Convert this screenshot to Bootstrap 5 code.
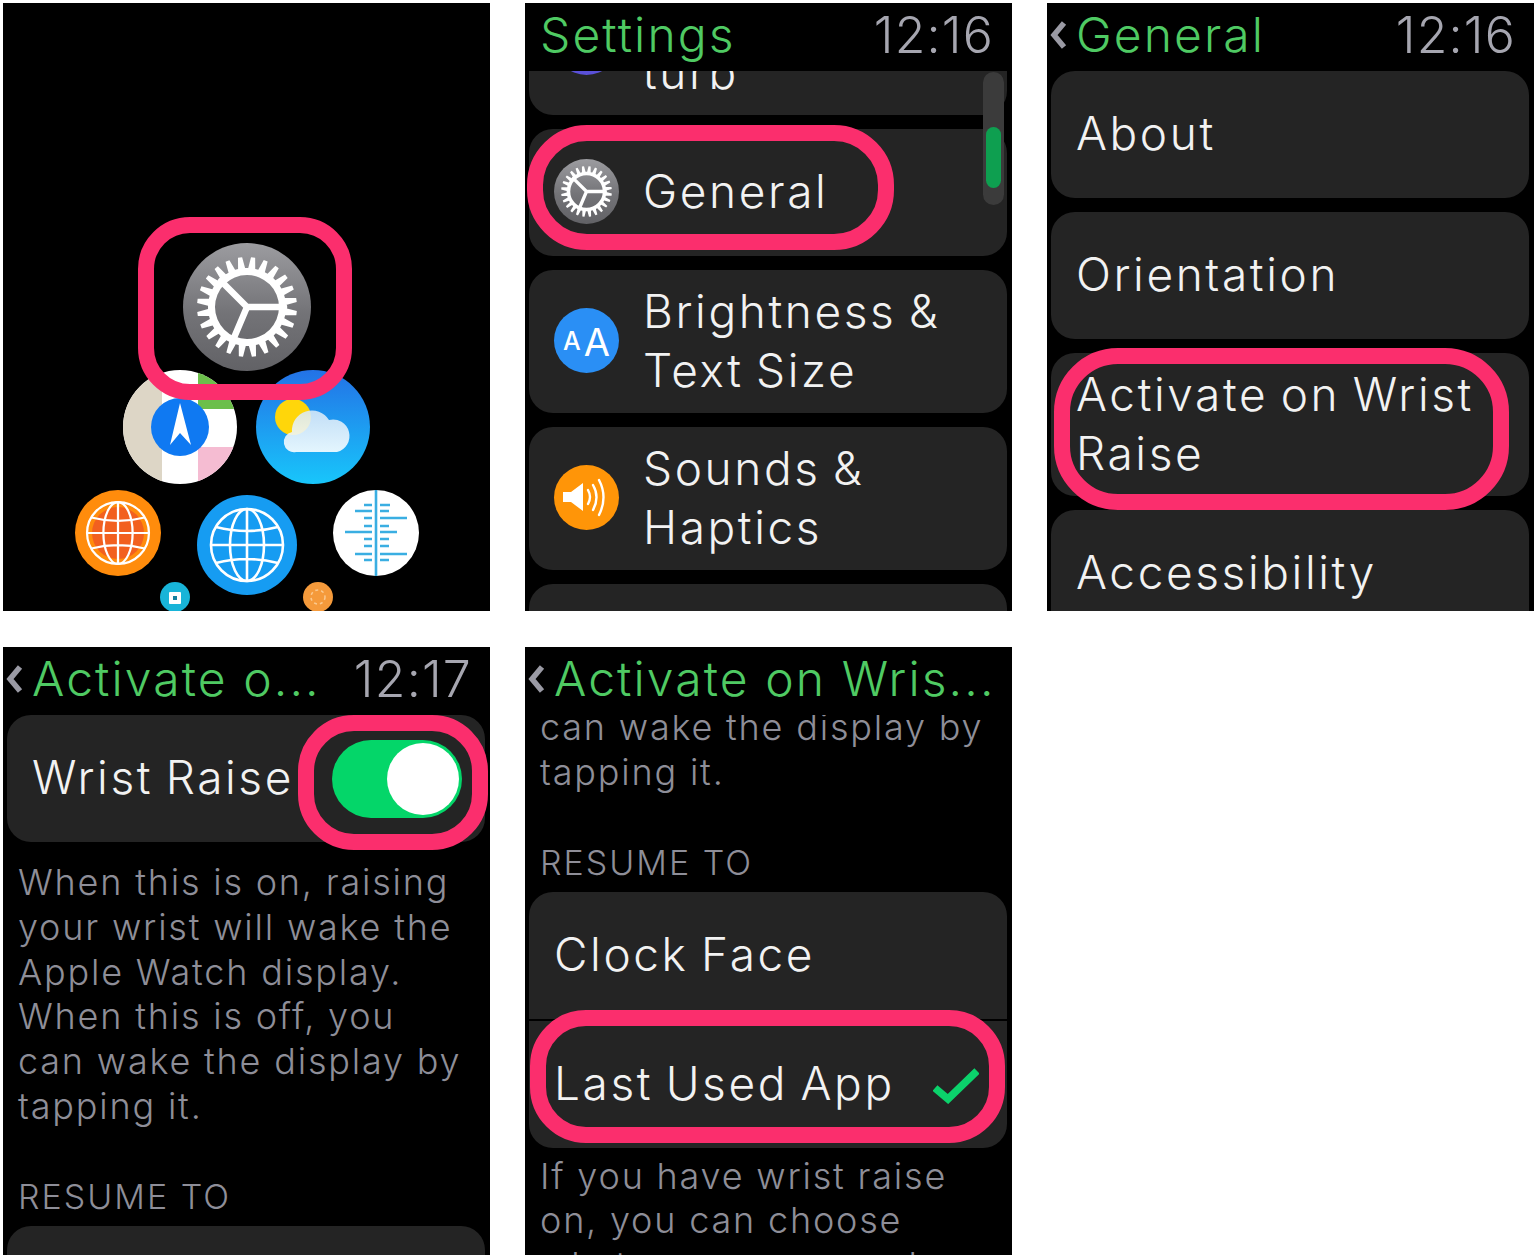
<!DOCTYPE html>
<html lang="en">
<head>
    <title>Apple Watch wrist raise settings</title>
    <meta charset="utf-8">
    <meta name="viewport" content="width=device-width, initial-scale=1">
    <link href="https://cdn.jsdelivr.net/npm/bootstrap@5.3.0/dist/css/bootstrap.min.css" rel="stylesheet">
    <script src="https://cdn.jsdelivr.net/npm/bootstrap@5.3.0/dist/js/bootstrap.bundle.min.js"></script>
    <style>
        body { background: #fff; font-family: Inter, "Liberation Sans", sans-serif; }
        .shots { grid-template-columns: repeat(3, 487px); column-gap: 35px; row-gap: 36px; padding: 3px 0 0 3px; }
        .shot { height: 608px; background: #000; }
        .shot-bar { height: 68px; flex: 0 0 68px; padding: 0 18px 4px 15px; font-size: 50px; font-weight: 300; letter-spacing: 1.2px; white-space: nowrap; }
        .shot-bar.with-back { padding-left: 3px; }
        .shot-title { color: #4fca63; font-weight: 350; font-size: 48px; letter-spacing: 2.1px; }
        .shot-time { color: #a6a6b0; }
        .back-arrow { width: 18px; height: 32px; margin-right: 8px; flex-shrink: 0; }
        .shot-list { margin: 0 5px 0 4px; gap: 14px; flex-shrink: 0; }
        .scrolled { margin-top: -99px; }
        .tile { background: #242424; border-radius: 24px; height: 127px; flex: 0 0 auto; color: #f2f2f2; font-size: 46px; font-weight: 300; line-height: 59px; letter-spacing: 2.6px; word-spacing: -3px; padding: 0 0 2px 25px; white-space: nowrap; }
        .tile.two-line { height: 143px; }
        .tile-icon { width: 65px; height: 65px; margin-right: 24px; flex-shrink: 0; }
        .tile-blue { background: #2a8ff5; color: #fff; letter-spacing: 0; line-height: 1; padding-top: 2px; }
        .tile-blue .aa-small { font-size: 25px; font-weight: 500; margin-right: 3px; }
        .tile-blue .aa-big { font-size: 38px; font-weight: 400; }
        .tile-orange { background: #ff9508; }
        .tile-purple { background: #5a50d8; }
        .tile-top { border-radius: 24px 24px 0 0; }
        .tile-bottom { border-radius: 0 0 24px 24px; margin-top: 2px; }
        .hint { color: #8e8e98; font-size: 36px; font-weight: 350; line-height: 44.8px; letter-spacing: 1.8px; padding: 0 15px; white-space: nowrap; flex-shrink: 0; }
        .hint-head { font-size: 34px; letter-spacing: 2px; margin-top: 46px; height: 51px; }
        .hint-first { margin-top: -10px; }
        .hint-under { margin-top: 18px; }
        .hint-below { margin-top: 6px; }
        .ring { position: absolute; border: 16px solid #fb2e6d; }
        .ring-home { left: 135px; top: 214px; width: 214px; height: 183px; border-radius: 52px; }
        .ring-general { left: 2px; top: 122px; width: 367px; height: 125px; border-radius: 60px; }
        .ring-activate { left: 7px; top: 345px; width: 455px; height: 162px; border-radius: 64px; }
        .ring-switch { left: 295px; top: 68px; width: 190px; height: 135px; border-radius: 56px; }
        .ring-last { left: 5px; top: 363px; width: 475px; height: 133px; border-radius: 56px; }
        .scroll-track { position: absolute; left: 458px; top: 69px; width: 21px; height: 133px; border-radius: 11px; background: #3b3b3b; }
        .scroll-thumb { position: absolute; left: 461px; top: 124px; width: 15px; height: 61px; border-radius: 8px; background: #0e9f50; }
        .switch-track { width: 130px; height: 78px; margin: 3px 23px 0 auto; background: #04d669; border-radius: 39px; padding: 3px; flex-shrink: 0; }
        .switch-knob { width: 72px; height: 72px; background: #fff; }
        .tick { width: 46px; height: 36px; margin: 6px 28px 0 auto; flex-shrink: 0; }
        .home-art { width: 487px; height: 608px; }
    </style>
</head>
<body>
<div class="shots d-grid">

    <!-- home screen -->
    <div class="shot position-relative overflow-hidden">
        <svg class="home-art d-block" viewBox="3 3 487 608" xmlns="http://www.w3.org/2000/svg">
            <defs>
                <linearGradient id="gearBg" x1="0" y1="0" x2="0" y2="1">
                    <stop offset="0" stop-color="#9c9ca0"/><stop offset=".55" stop-color="#737377"/><stop offset="1" stop-color="#626266"/>
                </linearGradient>
                <linearGradient id="skyBg" x1="0" y1="0" x2="0" y2="1">
                    <stop offset="0" stop-color="#2372e6"/><stop offset="1" stop-color="#18c6fb"/>
                </linearGradient>
                <linearGradient id="cloudBg" x1="0" y1="0" x2="0" y2="1">
                    <stop offset="0" stop-color="#d8e9f8"/><stop offset="1" stop-color="#ffffff"/>
                </linearGradient>
                <clipPath id="mapClip"><circle cx="180" cy="427" r="57"/></clipPath>
                <symbol id="gear" viewBox="-64 -64 128 128">
                    <circle r="64" fill="url(#gearBg)"/>
                    <path id="gearTeeth" fill="#fff" fill-rule="evenodd"/>
                    <path d="M0 0L-26-26M0 0L37 0M0 0L-14 33" stroke="#fff" stroke-width="6.5" stroke-linecap="round" fill="none"/>
                </symbol>
                <symbol id="globe" viewBox="-50 -50 100 100">
                    <g fill="none" stroke="#fff" stroke-width="2.6">
                        <circle r="36"/>
                        <ellipse rx="17" ry="36"/>
                        <path d="M0-36V36M-36 0H36M-31-18Q0-10 31-18M-31 18Q0 10 31 18"/>
                    </g>
                </symbol>
            </defs>
            <use href="#gear" x="183" y="243" width="128" height="128"/>

            <g clip-path="url(#mapClip)">
                <rect x="123" y="370" width="114" height="114" fill="#fff"/>
                <rect x="123" y="370" width="39" height="114" fill="#ddd6c6"/>
                <rect x="198" y="370" width="39" height="39" fill="#6cbf4b"/>
                <rect x="198" y="447" width="39" height="37" fill="#f5bcd2"/>
            </g>
            <circle cx="180" cy="427" r="29" fill="#0f79f2"/>
            <path d="M180 403L170 445L180 433L191 445Z" fill="#fff"/>

            <circle cx="313" cy="427" r="57" fill="url(#skyBg)"/>
            <circle cx="293" cy="417" r="18" fill="#ffd60a"/>
            <g fill="url(#cloudBg)" opacity=".88">
                <path d="M296 452a10 10 0 0 1-4-20a20 20 0 0 1 37-12a13 13 0 0 1 8 32Z"/>
            </g>

            <circle cx="118" cy="533" r="43" fill="#ff8c0c"/>
            <circle cx="118" cy="533" r="26" fill="#f2601f"/>
            <use href="#globe" x="75" y="490" width="86" height="86"/>

            <circle cx="247" cy="545" r="50" fill="#169cf2"/>
            <use href="#globe" x="197" y="495" width="100" height="100"/>

            <circle cx="376" cy="533" r="43" fill="#fff"/>
            <g transform="translate(376 533)" stroke="#3aaee2" stroke-width="2.6" fill="none">
                <path d="M0-43V43"/>
                <path d="M-12-28H-4M4-28H14M-21-22H-4M4-22H13M-12-15H-4M4-15H31M-12-7H-4M4-7H13M-31-1H-4M4-1H21M-12 6H-4M4 6H13M-12 13H-4M4 13H13M-21 21H-4M4 21H31M-12 27H-4M4 27H13"/>
            </g>

            <circle cx="175" cy="597" r="15" fill="#18b4d8"/>
            <rect x="169" y="592" width="12" height="12" rx="1" fill="#fff"/>
            <rect x="173" y="596" width="4" height="4" fill="#14809e"/>
            <circle cx="318" cy="597" r="15" fill="#f59a3b"/>
            <circle cx="318" cy="597" r="7" fill="none" stroke="#fbc98e" stroke-width="1.5" stroke-dasharray="3 3"/>
        </svg>
        <div class="ring ring-home"></div>
    </div>

    <!-- settings list -->
    <div class="shot position-relative overflow-hidden d-flex flex-column">
        <div class="shot-bar d-flex justify-content-between align-items-center">
            <span class="shot-title">Settings</span>
            <span class="shot-time">12:16</span>
        </div>
        <div class="overflow-hidden">
            <div class="shot-list scrolled d-flex flex-column">
                <div class="tile two-line d-flex align-items-center">
                    <div class="tile-icon tile-purple rounded-circle"></div>
                    <div>Do Not Dis<br>turb</div>
                </div>
                <div class="tile d-flex align-items-center">
                    <svg class="tile-icon" viewBox="0 0 65 65" xmlns="http://www.w3.org/2000/svg"><use href="#gear" width="65" height="65"/></svg>
                    <div>General</div>
                </div>
                <div class="tile two-line d-flex align-items-center">
                    <div class="tile-icon tile-blue rounded-circle d-flex align-items-center justify-content-center">
                        <span class="aa-small">A</span><span class="aa-big">A</span>
                    </div>
                    <div>Brightness &amp;<br>Text Size</div>
                </div>
                <div class="tile two-line d-flex align-items-center">
                    <svg class="tile-icon tile-orange rounded-circle" viewBox="0 0 65 65" xmlns="http://www.w3.org/2000/svg">
                        <path d="M9 27H17L29 18V46L17 37H9Z" fill="#fff"/>
                        <path d="M34 25Q38 32 34 39M39 20Q46 32 39 45M45 15Q54 32 45 50" fill="none" stroke="#fff" stroke-width="2.4" stroke-linecap="round"/>
                    </svg>
                    <div>Sounds &amp;<br>Haptics</div>
                </div>
                <div class="tile"></div>
            </div>
        </div>
        <div class="scroll-track"></div>
        <div class="scroll-thumb"></div>
        <div class="ring ring-general"></div>
    </div>

    <!-- general list -->
    <div class="shot position-relative overflow-hidden d-flex flex-column">
        <div class="shot-bar with-back d-flex align-items-center">
            <svg class="back-arrow" viewBox="0 0 18 32" xmlns="http://www.w3.org/2000/svg"><path d="M14 4L4 16L14 28" fill="none" stroke="#9a9aa4" stroke-width="5.5"/></svg>
            <span class="shot-title">General</span>
            <span class="shot-time ms-auto">12:16</span>
        </div>
        <div class="shot-list d-flex flex-column">
            <div class="tile d-flex align-items-center">About</div>
            <div class="tile d-flex align-items-center">Orientation</div>
            <div class="tile two-line d-flex align-items-center">
                <div>Activate on Wrist<br>Raise</div>
            </div>
            <div class="tile d-flex align-items-center">Accessibility</div>
        </div>
        <div class="ring ring-activate"></div>
    </div>

    <!-- wrist raise, top of the page -->
    <div class="shot position-relative overflow-hidden d-flex flex-column">
        <div class="shot-bar with-back d-flex align-items-center">
            <svg class="back-arrow" viewBox="0 0 18 32" xmlns="http://www.w3.org/2000/svg"><path d="M14 4L4 16L14 28" fill="none" stroke="#9a9aa4" stroke-width="5.5"/></svg>
            <span class="shot-title">Activate o...</span>
            <span class="shot-time ms-auto">12:17</span>
        </div>
        <div class="shot-list d-flex flex-column">
            <div class="tile d-flex align-items-center">
                <span>Wrist Raise</span>
                <div class="switch-track d-flex justify-content-end">
                    <div class="switch-knob rounded-circle"></div>
                </div>
            </div>
        </div>
        <div class="hint hint-under">
            When this is on, raising<br>your wrist will wake the<br>Apple Watch display.<br>When this is off, you<br>can wake the display by<br>tapping it.
        </div>
        <div class="hint hint-head">RESUME TO</div>
        <div class="shot-list d-flex flex-column">
            <div class="tile tile-top"></div>
        </div>
        <div class="ring ring-switch"></div>
    </div>

    <!-- wrist raise, scrolled -->
    <div class="shot position-relative overflow-hidden d-flex flex-column">
        <div class="shot-bar with-back d-flex align-items-center">
            <svg class="back-arrow" viewBox="0 0 18 32" xmlns="http://www.w3.org/2000/svg"><path d="M14 4L4 16L14 28" fill="none" stroke="#9a9aa4" stroke-width="5.5"/></svg>
            <span class="shot-title">Activate on Wris...</span>
        </div>
        <div class="overflow-hidden">
            <div class="hint hint-first">can wake the display by<br>tapping it.</div>
            <div class="hint hint-head">RESUME TO</div>
            <div class="shot-list d-flex flex-column">
                <div class="tile tile-top d-flex align-items-center">Clock Face</div>
            </div>
            <div class="shot-list d-flex flex-column">
                <div class="tile tile-bottom d-flex align-items-center">
                    <span>Last Used App</span>
                    <svg class="tick" viewBox="0 0 46 36" xmlns="http://www.w3.org/2000/svg"><path d="M2 20L15 31L44 3" fill="none" stroke="#0bd26b" stroke-width="7.5"/></svg>
                </div>
            </div>
            <div class="hint hint-below">If you have wrist raise<br>on, you can choose<br>what app you see when</div>
        </div>
        <div class="ring ring-last"></div>
    </div>
</div>
<script>
    // gear outline: 24 tapered teeth round a ring with a round hole
    const pt = (r, deg) => {
        const a = deg * Math.PI / 180;
        return (r * Math.cos(a)).toFixed(2) + ' ' + (r * Math.sin(a)).toFixed(2);
    };
    let gearPath = '';
    for (let i = 0; i < 24; i++) {
        const a = i * 15 + 7;
        gearPath += (i ? 'L' : 'M') + pt(39, a - 5.2) + 'L' + pt(50, a - 2.4) + 'L' + pt(50, a + 2.4) + 'L' + pt(39, a + 5.2);
    }
    gearPath += 'ZM-32 0a32 32 0 1 0 64 0a32 32 0 1 0-64 0Z';
    document.getElementById('gearTeeth').setAttribute('d', gearPath);
</script>
</body>
</html>
